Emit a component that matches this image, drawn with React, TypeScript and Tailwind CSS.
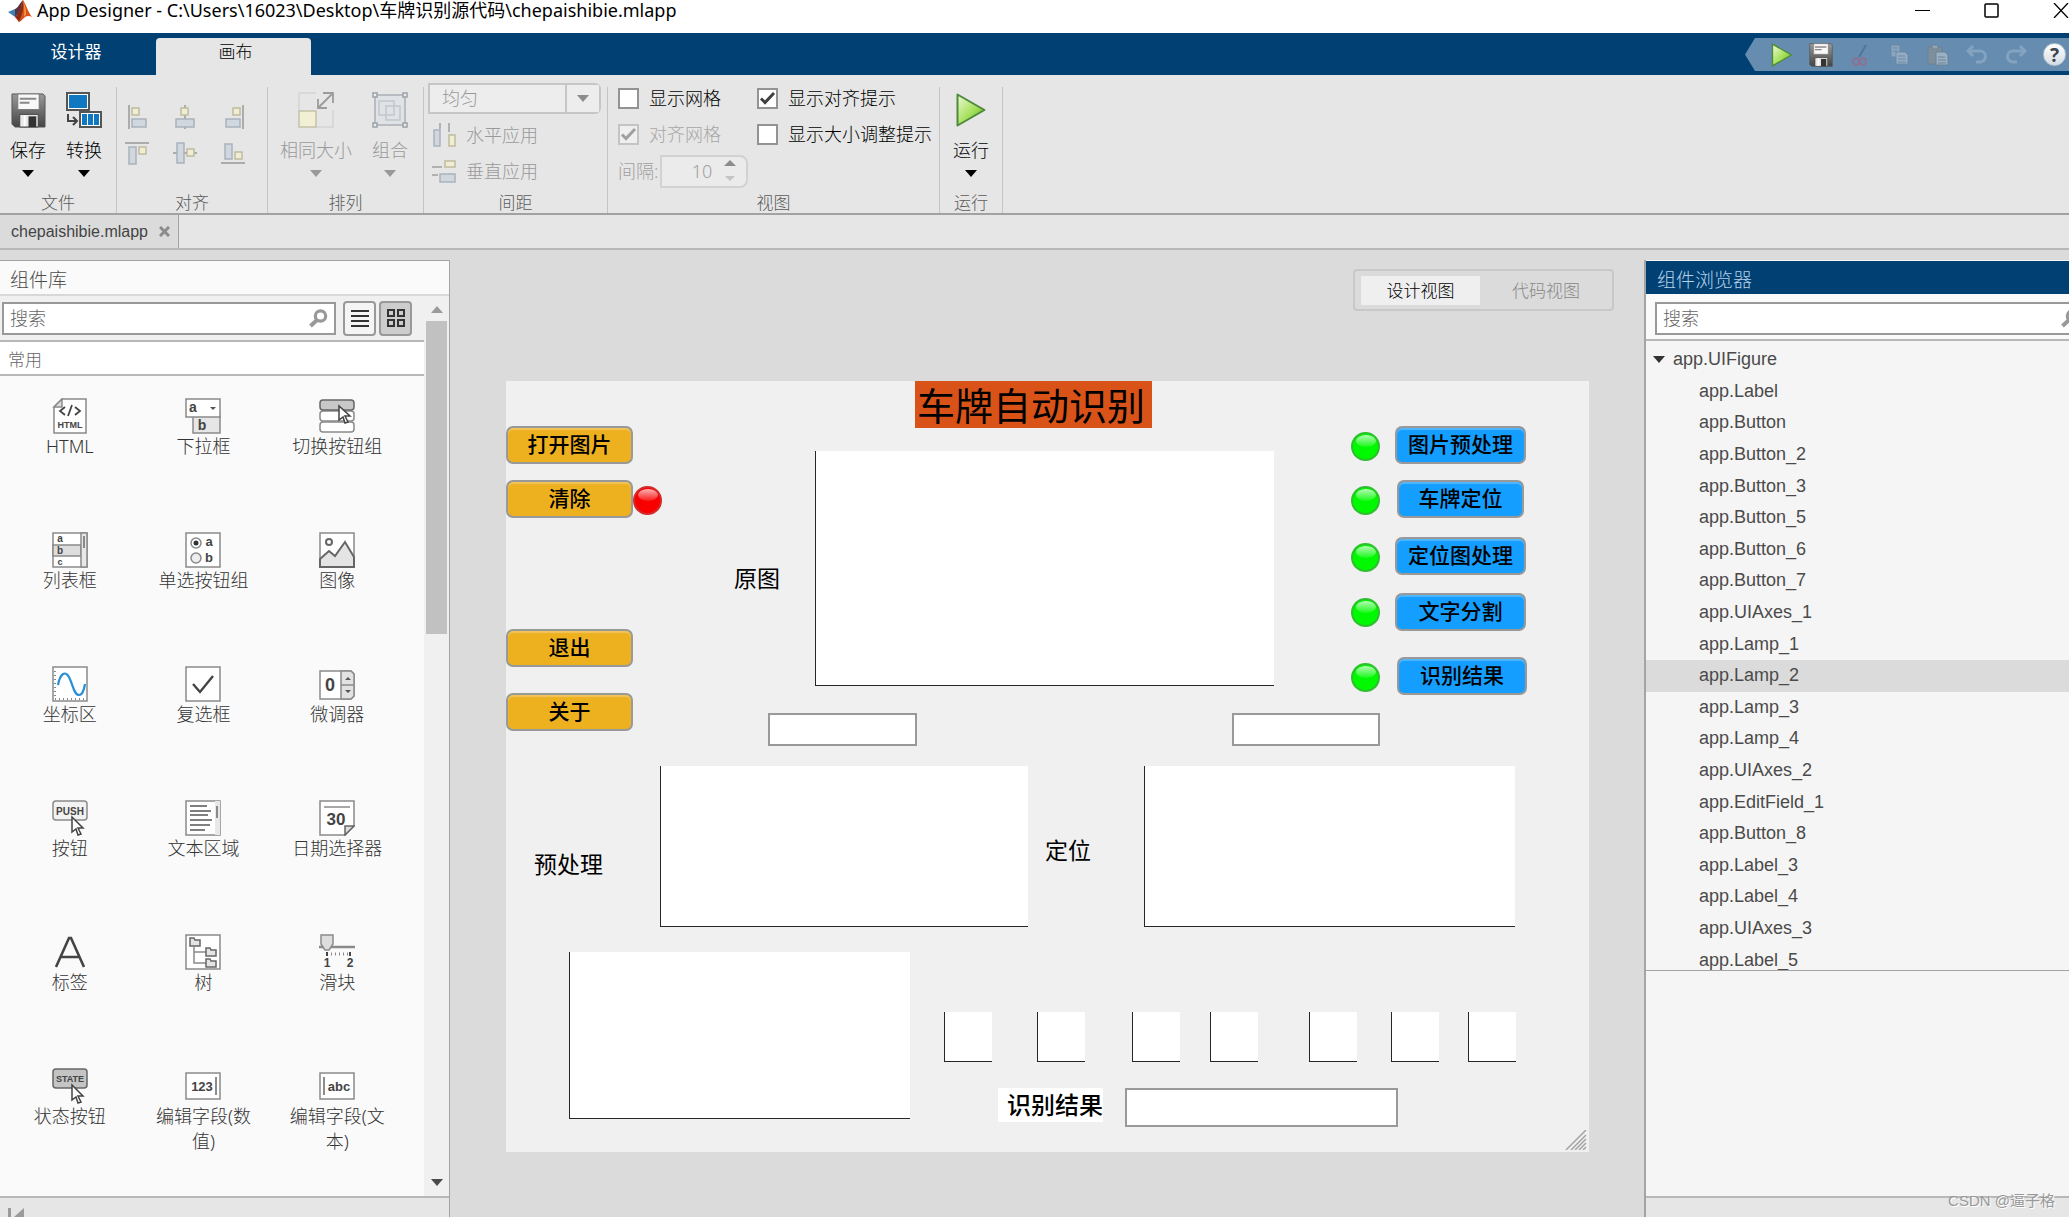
import React from "react";

const UI = "font-['Noto_Sans','Noto_Sans_CJK_SC',sans-serif]";
const ARIAL = "font-['Liberation_Sans','Noto_Sans_CJK_SC',sans-serif]";
const SERIF = "font-['Liberation_Serif','Noto_Sans_CJK_SC',serif]";

type P = { children?: React.ReactNode };

/* ---------- shared glyphs ---------- */

function Caret({ className = "" }: { className?: string }) {
  return (
    <svg className={className} width="12" height="7" viewBox="0 0 12 7" aria-hidden="true">
      <path d="M0 0h12L6 7z" fill="currentColor" />
    </svg>
  );
}

function Magnifier() {
  return (
    <svg width="19" height="19" viewBox="0 0 19 19" fill="none" stroke="#999" aria-hidden="true">
      <circle cx="11.5" cy="7" r="5.2" strokeWidth="3.2" />
      <path d="M7.5 11.5L1.5 17" strokeWidth="4" />
    </svg>
  );
}

function Floppy({ className = "" }: { className?: string }) {
  return (
    <svg className={className} viewBox="0 0 36 36" aria-hidden="true">
      <defs>
        <linearGradient id="floppy" x1="0" y1="0" x2="0" y2="1">
          <stop offset="0" stopColor="#9a9a9a" />
          <stop offset="1" stopColor="#444" />
        </linearGradient>
      </defs>
      <path d="M1 1h32l2 2v32H4l-3-3z" fill="url(#floppy)" stroke="#555" />
      <path d="M7 1h22v16H7z" fill="#f8f8f8" stroke="#777" />
      <path d="M9 6h17M9 10h10" stroke="#888" strokeWidth="2" />
      <path d="M9 22h19v13H9z" fill="#e8e8e8" stroke="#444" />
      <path d="M18 24h8v11h-8z" fill="#333" />
      <path d="M13 23h2v11h-2z" fill="#fff" />
    </svg>
  );
}

function Play({ className = "" }: { className?: string }) {
  return (
    <svg className={className} viewBox="0 0 30 34" aria-hidden="true">
      <defs>
        <linearGradient id="play" x1="0" y1="0" x2="1" y2="1">
          <stop offset="0" stopColor="#eefbd8" />
          <stop offset="0.55" stopColor="#a5e05a" />
          <stop offset="1" stopColor="#5cab1c" />
        </linearGradient>
      </defs>
      <path d="M1.5 1.5v31L28.5 17z" fill="url(#play)" stroke="#4d8a3c" strokeWidth="2" strokeLinejoin="round" />
    </svg>
  );
}

function MatlabLogo() {
  return (
    <svg width="24" height="22" viewBox="0 0 24 22" aria-hidden="true">
      <path d="M0 12l7-3 4 3-4 5z" fill="#3f7fb5" />
      <path d="M7 9c3-1 4-5 8-9l-3 13-5 4z" fill="#5b3340" />
      <path d="M15 0c3 4 5 12 9 17-4-2-6-1-8 1-2 2-3 3-5 4l-4-5c4-2 6-9 8-17z" fill="#d9531e" />
      <path d="M15 0c1 6 0 13-4 22-1-2-2-4-4-5 4-2 6-9 8-17z" fill="#8c2a1a" />
      <path d="M15 1c1 4 2 9 1 16l2-3c0-5-1-9-3-13z" fill="#f6a33b" />
    </svg>
  );
}

/* ---------- ribbon ---------- */

function Section({ label, width, children }: P & { label: string; width: string }) {
  return (
    <>
      <section className={`flex h-full shrink-0 flex-col ${width}`}>
        <div className="flex flex-1">{children}</div>
        <div className="h-5 text-center text-[17px] leading-5 text-[#5a5a5a]">{label}</div>
      </section>
      <div className="mt-3 w-px shrink-0 bg-[#c4c4c4]" />
    </>
  );
}

function Tool({ label, width, muted, children }: P & { label: string; width: string; muted?: boolean }) {
  return (
    <button disabled={muted} className={`flex shrink-0 flex-col items-center self-start pt-[17px] ${width} ${muted ? "text-[#999]" : "text-black"}`}>
      <span className="flex h-9 items-center">{children}</span>
      <span className="mt-2.5 whitespace-nowrap text-[18px] leading-6">{label}</span>
      <Caret className="mt-2" />
    </button>
  );
}

const alignIcons: { name: string; line: string; small: [number, number]; big: [number, number, number, number] }[] = [
  { name: "左对齐", line: "M4 0v24", small: [7, 3], big: [7, 14, 14, 8] },
  { name: "水平居中", line: "M12 0v24", small: [8, 3], big: [3, 14, 18, 8] },
  { name: "右对齐", line: "M22 0v24", small: [12, 3], big: [5, 14, 14, 8] },
  { name: "顶端对齐", line: "M0 2h24", small: [14, 6], big: [4, 6, 7, 17] },
  { name: "垂直居中", line: "M0 12h24", small: [14, 8], big: [4, 2, 7, 20] },
  { name: "底端对齐", line: "M0 22h24", small: [14, 11], big: [4, 3, 7, 15] },
];

function AlignIcon({ line, small, big }: (typeof alignIcons)[number]) {
  return (
    <svg width="24" height="24" viewBox="0 0 24 24" strokeWidth="1.5" aria-hidden="true">
      <path d={line} stroke="#acacac" strokeWidth="2" />
      <rect x={big[0]} y={big[1]} width={big[2]} height={big[3]} fill="#d0d7de" stroke="#a9b3bc" />
      <rect x={small[0]} y={small[1]} width="7" height="7" fill="#f0eed2" stroke="#bfbca0" />
    </svg>
  );
}

function Check({ label, checked, muted }: { label: string; checked?: boolean; muted?: boolean }) {
  return (
    <label className={`flex h-9 items-center gap-2.5 whitespace-nowrap text-[18px] leading-6 ${muted ? "text-[#a6a6a6]" : "text-black"}`}>
      <span className="grid shrink-0">
        <input
          type="checkbox"
          defaultChecked={checked}
          disabled={muted}
          className="peer col-start-1 row-start-1 size-[21px] appearance-none border-2 border-[#939393] bg-white disabled:border-[#c4c4c4] disabled:bg-[#efefef]"
        />
        <svg className="pointer-events-none invisible col-start-1 row-start-1 peer-checked:visible" width="21" height="21" viewBox="0 0 21 21" fill="none" stroke={muted ? "#a0a0a0" : "#404040"} strokeWidth="3" aria-hidden="true">
          <path d="M4 10.5l4 4 9-9.5" />
        </svg>
      </span>
      {label}
    </label>
  );
}

function Ribbon() {
  return (
    <div className={`flex h-[140px] shrink-0 overflow-hidden border-b-2 border-[#a2a2a2] bg-[#e6e6e6] font-light ${UI}`}>
      <Section label="文件" width="w-[116px]">
        <Tool label="保存" width="w-14">
          <Floppy className="size-[35px]" />
        </Tool>
        <Tool label="转换" width="w-14">
          <svg width="36" height="36" viewBox="0 0 36 36" aria-hidden="true">
            <path d="M1 1h22v17H1z" fill="#fff" stroke="#555" strokeWidth="2" />
            <path d="M3 3h18v13H3z" fill="#0f78c0" />
            <path d="M2 22v7h8M7 25l4 4-4 4" fill="none" stroke="#444" strokeWidth="2" />
            <path d="M14 20h21v15H14z" fill="#fff" stroke="#555" strokeWidth="2" />
            <path d="M16 22h5v11h-5zM22 22h5v11h-5zM28 22h5v11h-5z" fill="#0f78c0" />
          </svg>
        </Tool>
      </Section>

      <Section label="对齐" width="w-[150px]">
        <div className="grid h-fit grid-cols-[24px_24px_24px] gap-x-6 gap-y-3 pt-[30px] pl-2">
          {alignIcons.map((a) => (
            <button key={a.name} aria-label={a.name} disabled>
              <AlignIcon {...a} />
            </button>
          ))}
        </div>
      </Section>

      <Section label="排列" width="w-[155px]">
        <div className="flex gap-5 pl-3">
          <Tool label="相同大小" width="w-[72px]" muted>
            <svg width="36" height="36" viewBox="0 0 36 36" fill="none" aria-hidden="true">
              <path d="M1 18V1h17M35 18v17H18" stroke="#d4d4d4" strokeWidth="1.5" />
              <path d="M1 19h17v16H1z" fill="#f1efd4" stroke="#c5c2a8" strokeWidth="1.5" />
              <path d="M20 16L35 1M25 1h10v10M20 7v9h9" stroke="#9c9c9c" strokeWidth="1.8" />
            </svg>
          </Tool>
          <Tool label="组合" width="w-9" muted>
            <svg width="36" height="36" viewBox="0 0 36 36" fill="none" aria-hidden="true">
              <path d="M3 3h30v30H3z" fill="#dfe3e6" stroke="#aab0b6" strokeWidth="1.5" />
              <path d="M7 9h15v14H7zM14 14h14v14H14z" stroke="#c3c8cc" strokeWidth="1.5" />
              <path d="M1 1h4v4H1zM31 1h4v4h-4zM1 31h4v4H1zM31 31h4v4h-4z" fill="#eee" stroke="#9aa1a8" strokeWidth="1.5" />
            </svg>
          </Tool>
        </div>
      </Section>

      <Section label="间距" width="w-[183px]">
        <div className="flex flex-col pt-2 pl-1 text-[#999]">
          <div className="mb-[3px] grid h-[31px] w-[173px] grid-cols-[1fr_34px] items-center rounded-r-md border-2 border-[#c6c6c6]">
            <select disabled aria-label="间距方式" className="col-span-2 col-start-1 row-start-1 h-full w-full appearance-none bg-[#ededed] pl-3 text-[18px] text-[#999] opacity-100">
              <option>均匀</option>
            </select>
            <span className="pointer-events-none col-start-2 row-start-1 flex h-full items-center justify-center border-l-2 border-[#c6c6c6] text-[#8c8c8c]">
              <Caret />
            </span>
          </div>
          <button disabled className="flex h-9 items-center gap-2.5 pl-1 text-[18px] leading-6">
            <svg width="24" height="24" viewBox="0 0 24 24" strokeWidth="1.5" aria-hidden="true">
              <path d="M8 0v6M17 0v9" stroke="#a0a0a0" strokeWidth="1.5" />
              <path d="M2 7h6v16H2z" fill="#d0d7de" stroke="#a9b3bc" />
              <path d="M17 12h6v11h-6z" fill="#f0eed2" stroke="#bfbca0" />
            </svg>
            水平应用
          </button>
          <button disabled className="flex h-9 items-center gap-2.5 pl-1 text-[18px] leading-6">
            <svg width="24" height="24" viewBox="0 0 24 24" strokeWidth="1.5" aria-hidden="true">
              <path d="M0 8h10M0 16h6" stroke="#a0a0a0" strokeWidth="1.5" />
              <path d="M13 2h10v6H13z" fill="#f0eed2" stroke="#bfbca0" />
              <path d="M8 15h15v8H8z" fill="#d0d7de" stroke="#a9b3bc" />
            </svg>
            垂直应用
          </button>
        </div>
      </Section>

      <Section label="视图" width="w-[331px]">
        <div className="grid h-fit grid-cols-[139px_1fr] pt-[5px] pl-2.5">
          <Check label="显示网格" />
          <Check label="显示对齐提示" checked />
          <Check label="对齐网格" checked muted />
          <Check label="显示大小调整提示" />
          <label className="flex h-[38px] items-center text-[18px] whitespace-nowrap text-[#a0a0a0]">
            间隔:
            <span className="ml-0.5 flex h-[33px] w-[88px] shrink-0 items-center rounded-r-lg border-2 border-[#d2d2d2] bg-[#ebebeb]">
              <input disabled defaultValue="10" className="w-[50px] bg-transparent text-right text-[18px]" />
              <svg className="ml-3" width="12" height="22" viewBox="0 0 12 22" aria-hidden="true">
                <path d="M0 6l6-6 6 6z" fill="#8c8c8c" />
                <path d="M1 16h10l-5 5z" fill="#c4c4c4" />
              </svg>
            </span>
          </label>
        </div>
      </Section>

      <Section label="运行" width="w-[62px]">
        <Tool label="运行" width="w-full">
          <Play className="h-[34px] w-[30px]" />
        </Tool>
      </Section>
    </div>
  );
}

/* ---------- quick access ---------- */

const quick: { name: string; icon: React.ReactNode }[] = [
  { name: "运行", icon: <Play className="h-6 w-[22px]" /> },
  { name: "保存", icon: <Floppy className="size-6" /> },
  {
    name: "剪切",
    icon: (
      <svg width="18" height="24" viewBox="0 0 18 24" fill="none" aria-hidden="true">
        <path d="M15 2L8 14" stroke="#4f7699" strokeWidth="2" />
        <path d="M5 15a3 3.5 0 1 0 .1 0zM12 15a3 3.5 0 1 0 .1 0z" stroke="#8d7192" strokeWidth="2" />
      </svg>
    ),
  },
  {
    name: "复制",
    icon: (
      <svg width="22" height="24" viewBox="0 0 22 24" stroke="#6a89a6" aria-hidden="true">
        <path d="M3 2h9v12H3z" fill="#8ba6bf" />
        <path d="M5 5h5M5 8h4" />
        <path d="M8 9h9l3 3v9H8z" fill="#95adc4" />
        <path d="M10 13h7M10 16h8M10 19h8" />
      </svg>
    ),
  },
  {
    name: "粘贴",
    icon: (
      <svg width="22" height="24" viewBox="0 0 22 24" stroke="#6c8296" aria-hidden="true">
        <path d="M1 4h14v17H1z" fill="#7d8f9a" />
        <path d="M5 2h6v4H5z" fill="#8fa3b3" />
        <path d="M9 9h9l3 3v10H9z" fill="#9ab0c5" />
        <path d="M11 14h7M11 17h8M11 20h8" />
      </svg>
    ),
  },
  {
    name: "撤消",
    icon: (
      <svg width="22" height="22" viewBox="0 0 22 22" fill="none" stroke="#83a3c1" strokeWidth="3" aria-hidden="true">
        <path d="M7 2L2 7l5 5M2 7h12a5.500 5.500 0 0 1 0 11h-4" />
      </svg>
    ),
  },
  {
    name: "重做",
    icon: (
      <svg width="22" height="22" viewBox="0 0 22 22" fill="none" stroke="#83a3c1" strokeWidth="3" aria-hidden="true">
        <path d="M15 2l5 5-5 5M20 7H8a5.500 5.500 0 0 0 0 11h4" />
      </svg>
    ),
  },
  {
    name: "帮助",
    icon: (
      <span className="flex size-[23px] items-center justify-center rounded-full border border-[#b8c6d2] bg-linear-to-b from-white to-[#d5dde4] text-[19px] leading-5 font-bold text-[#3c4650]">
        ?
      </span>
    ),
  },
];

function TabBar() {
  return (
    <div className={`flex h-[42px] shrink-0 items-end bg-[#004073] text-[17px] ${UI}`} role="tablist">
      <button role="tab" aria-selected="false" className="h-[37px] w-[156px] pr-1 pb-2.5 text-white">
        设计器
      </button>
      <button role="tab" aria-selected="true" className="h-[37px] w-[155px] rounded-t-sm bg-[#e6e6e6] pb-2.5 pl-1 font-light text-black">
        画布
      </button>
      <div className="mb-1 ml-auto flex h-[33px] w-[324px] overflow-hidden bg-[#668daf] pl-[17px] [clip-path:polygon(10px_0,100%_0,100%_100%,10px_100%,0_50%)]">
        {quick.map((q) => (
          <button key={q.name} aria-label={q.name} className="flex w-[39px] shrink-0 items-center justify-center">
            {q.icon}
          </button>
        ))}
      </div>
    </div>
  );
}

/* ---------- component library ---------- */

function Glyph({ children }: P) {
  return (
    <svg width="36" height="36" viewBox="0 0 36 36" fill="none" stroke="#8a8a8a" strokeWidth="1.500" aria-hidden="true">
      {children}
    </svg>
  );
}

function T({ x, y, size, children }: P & { x: number; y: number; size: number }) {
  return (
    <text x={x} y={y} fontSize={size} textAnchor="middle" stroke="none" fill="#444" className="font-['Liberation_Sans',sans-serif] font-bold">
      {children}
    </text>
  );
}

const Pointer = () => <path d="M20 17v15l4-3 2 6 3-1-3-6h5z" fill="#fff" stroke="#444" />;

const library: { label: string; icon: React.ReactNode }[] = [
  {
    label: "HTML",
    icon: (
      <Glyph>
        <path d="M10 1h24v34H2V9z" fill="#fff" />
        <path d="M2 9h8V1z" fill="#ddd" />
        <path d="M13 9l-5 4 5 4M23 9l5 4-5 4M20 7l-4 11" stroke="#444" strokeWidth="1.800" />
        <T x={18} y={30} size={9}>HTML</T>
      </Glyph>
    ),
  },
  {
    label: "下拉框",
    icon: (
      <Glyph>
        <path d="M8 18h27v17H8z" fill="#e6e6e6" />
        <path d="M1 1h34v18H1z" fill="#fff" />
        <path d="M25 9h6l-3 3z" fill="#555" stroke="none" />
        <T x={8} y={14} size={14}>a</T>
        <T x={17} y={32} size={14}>b</T>
      </Glyph>
    ),
  },
  {
    label: "切换按钮组",
    icon: (
      <Glyph>
        <rect x="1" y="24" width="34" height="10" rx="3" fill="#fff" />
        <rect x="1" y="13" width="34" height="10" rx="3" fill="#fff" />
        <rect x="1" y="2" width="34" height="10" rx="3" fill="#c8c8c8" stroke="#666" />
        <path d="M20 8v14l4-3 2 6 3-1-3-6h5z" fill="#fff" stroke="#444" />
      </Glyph>
    ),
  },
  {
    label: "列表框",
    icon: (
      <Glyph>
        <path d="M1 1h34v34H1z" fill="#fff" />
        <path d="M1 13h28v11H1z" fill="#ddd" />
        <path d="M29 1h6v34h-6z" fill="#e8e8e8" />
        <path d="M32 4v12" strokeWidth="2" />
        <T x={8} y={10} size={10}>a</T>
        <T x={8} y={22} size={10}>b</T>
        <T x={8} y={33} size={9}>c</T>
      </Glyph>
    ),
  },
  {
    label: "单选按钮组",
    icon: (
      <Glyph>
        <path d="M1 1h34v34H1z" fill="#fff" />
        <circle cx="11" cy="11" r="5" />
        <circle cx="11" cy="11" r="2.500" fill="#333" stroke="none" />
        <circle cx="11" cy="26" r="5" fill="#eee" />
        <T x={24} y={14} size={13}>a</T>
        <T x={24} y={30} size={13}>b</T>
      </Glyph>
    ),
  },
  {
    label: "图像",
    icon: (
      <Glyph>
        <path d="M1 1h34v34H1z" fill="#fff" />
        <path d="M1 27l9-8 6 5 10-14 9 15v10H1z" fill="#e4e4e4" stroke="#666" strokeWidth="2" />
        <circle cx="10" cy="10" r="3" stroke="#666" strokeWidth="2" />
      </Glyph>
    ),
  },
  {
    label: "坐标区",
    icon: (
      <Glyph>
        <path d="M1 1h34v34H1z" fill="#fff" />
        <path d="M3 5v28h29" strokeDasharray="1 3" strokeWidth="2" />
        <path d="M6 19C8 8 13 4 17 11c4 8 5 18 10 18 4 0 5-6 6-11" stroke="#2a8fd6" strokeWidth="2.200" />
      </Glyph>
    ),
  },
  {
    label: "复选框",
    icon: (
      <Glyph>
        <path d="M1 1h34v34H1z" fill="#fff" />
        <path d="M8 18l7 8L28 10" stroke="#444" strokeWidth="2.400" />
      </Glyph>
    ),
  },
  {
    label: "微调器",
    icon: (
      <Glyph>
        <path d="M1 5h31l3 3v22l-3 3H1z" fill="#fff" />
        <path d="M22 5h10l3 3v22l-3 3H22zM22 19h13" fill="#e2e2e2" />
        <path d="M26 14h6l-3-3zM26 24h6l-3 3z" fill="#555" stroke="none" />
        <T x={11} y={25} size={18}>0</T>
      </Glyph>
    ),
  },
  {
    label: "按钮",
    icon: (
      <Glyph>
        <rect x="1" y="1" width="34" height="19" rx="3" fill="#f2f2f2" />
        <T x={18} y={15} size={10}>PUSH</T>
        <Pointer />
      </Glyph>
    ),
  },
  {
    label: "文本区域",
    icon: (
      <Glyph>
        <path d="M1 1h34v34H1z" fill="#fff" />
        <path d="M30 1h5v34h-5z" fill="#e8e8e8" stroke="none" />
        <path d="M5 6h17M5 11h21M5 15h18M5 20h22M5 25h20M5 30h15" stroke="#555" strokeWidth="1.600" />
        <path d="M32 6v12" strokeWidth="2" />
      </Glyph>
    ),
  },
  {
    label: "日期选择器",
    icon: (
      <Glyph>
        <path d="M1 1h34v25l-9 9H1z" fill="#fff" />
        <path d="M5 7h26" />
        <path d="M26 35v-9h9z" fill="#ddd" stroke="#666" />
        <T x={17} y={25} size={17}>30</T>
      </Glyph>
    ),
  },
  {
    label: "标签",
    icon: (
      <Glyph>
        <path d="M4 33L17 4h2l13 29M9 23h18" stroke="#444" strokeWidth="2.600" />
      </Glyph>
    ),
  },
  {
    label: "树",
    icon: (
      <Glyph>
        <path d="M1 1h34v34H1z" fill="#fff" />
        <path d="M9 13v16h12M9 18h12" />
        <path d="M5 4h4l1 2h5v6H5zM21 14h4l1 2h5v6H21zM21 25h4l1 2h5v6H21z" fill="#e4e4e4" stroke="#666" />
      </Glyph>
    ),
  },
  {
    label: "滑块",
    icon: (
      <Glyph>
        <path d="M0 13h36" strokeWidth="2.500" />
        <path d="M2 1h12v9l-4 6H6l-4-6z" fill="#ddd" />
        <path d="M8 18v4M31 18v4" stroke="#444" strokeWidth="2" />
        <path d="M12 20h17" strokeDasharray="1 3" strokeWidth="3" />
        <T x={8} y={33} size={12}>1</T>
        <T x={31} y={33} size={12}>2</T>
      </Glyph>
    ),
  },
  {
    label: "状态按钮",
    icon: (
      <Glyph>
        <rect x="1" y="1" width="34" height="19" rx="3" fill="#c4c4c4" stroke="#666" />
        <T x={18} y={14} size={9}>STATE</T>
        <Pointer />
      </Glyph>
    ),
  },
  {
    label: "编辑字段(数值)",
    icon: (
      <Glyph>
        <path d="M1 5h34v26H1z" fill="#fff" />
        <path d="M31 9v18" stroke="#666" />
        <T x={17} y={23} size={13}>123</T>
      </Glyph>
    ),
  },
  {
    label: "编辑字段(文本)",
    icon: (
      <Glyph>
        <path d="M1 5h34v26H1z" fill="#fff" />
        <path d="M5 9v18" stroke="#666" />
        <T x={20} y={23} size={13}>abc</T>
      </Glyph>
    ),
  },
];

function LibraryPanel() {
  return (
    <aside className={`flex w-[450px] shrink-0 flex-col border-t border-r border-[#a4a4a4] bg-[#fafafa] font-light ${UI}`}>
      <h2 className="h-[35px] shrink-0 border-b-2 border-[#d8d8d8] pl-2.5 text-[19px] leading-[38px] font-light text-[#4c4c4c]">组件库</h2>
      <div className="flex min-h-0 flex-1">
        <div className="flex w-[424px] shrink-0 flex-col">
          <div className="flex h-[46px] shrink-0 items-center border-b-2 border-[#b8b8b8] bg-[#f0f0f0] pl-0.5">
            <label className="flex h-[33px] w-[334px] items-center border-2 border-[#999] bg-white pr-1.5">
              <input placeholder="搜索" aria-label="搜索组件" className="min-w-0 flex-1 pl-1.5 text-[18px] placeholder:text-[#666]" />
              <Magnifier />
            </label>
            <button aria-label="列表视图" className="ml-[7px] flex h-[35px] w-[33px] items-center justify-center rounded border-2 border-[#999] bg-[#f5f5f5]">
              <svg width="18" height="18" viewBox="0 0 18 18" stroke="#333" strokeWidth="2" aria-hidden="true">
                <path d="M0 2h18M0 7h18M0 12h18M0 17h18" />
              </svg>
            </button>
            <button aria-label="网格视图" className="ml-[3px] flex h-[35px] w-[33px] items-center justify-center rounded border-2 border-[#999] bg-[#cdcdcd]">
              <svg width="20" height="20" viewBox="0 0 20 20" fill="none" stroke="#333" strokeWidth="2" aria-hidden="true">
                <path d="M2 2h6v6H2zM12 2h6v6h-6zM2 12h6v6H2zM12 12h6v6h-6z" />
              </svg>
            </button>
          </div>
          <h3 className="h-[34px] shrink-0 border-b-2 border-[#b8b8b8] bg-white pl-2 text-[17px] leading-9 font-light text-[#666]">常用</h3>
          <div className="grid auto-rows-[134px] grid-cols-3 pt-[22px] pr-5 pl-[3px]">
            {library.map((c) => (
              <button key={c.label} className="flex flex-col items-center self-start px-3">
                {c.icon}
                <span className="text-[18px] leading-[25px] text-[#333]">{c.label}</span>
              </button>
            ))}
          </div>
        </div>
        <div className="flex w-[25px] flex-col items-center bg-[#f0f0f0] pt-2.5">
          <Caret className="rotate-180 text-[#9a9a9a]" />
          <div className="mt-2 h-[313px] w-[21px] bg-[#c1c1c1]" />
          <Caret className="mt-auto mb-2.5 text-[#4a4a4a]" />
        </div>
      </div>
      <div className="flex h-[21px] shrink-0 items-start border-t-2 border-[#b8b8b8] bg-[#e6e6e6] pt-2.5 pl-2">
        <svg width="17" height="9" viewBox="0 0 17 9" fill="#9a9a9a" aria-hidden="true">
          <path d="M0 0h3v9H0zM16 0v9H6z" />
        </svg>
      </div>
    </aside>
  );
}

/* ---------- design canvas: every item has its own free position ---------- */

function Axes({ place }: { place: string }) {
  return <div className={`absolute border-b border-l border-[#262626] bg-white ${place}`} />;
}

function Field({ place, name }: { place: string; name: string }) {
  return <input aria-label={name} className={`absolute border-2 border-[#999] bg-white ${place}`} />;
}

function PushButton({ place, tone, label }: { place: string; tone: string; label: string }) {
  return (
    <button className={`absolute flex h-[38px] items-center justify-center rounded-[7px] border-2 border-[#999] text-[21px] leading-none font-medium text-black shadow-[inset_0_2px_1px_rgba(255,255,255,0.25)] ${place} ${tone}`}>
      {label}
    </button>
  );
}

function Lamp({ place, tone }: { place: string; tone: string }) {
  return (
    <div className={`absolute size-[29px] overflow-hidden rounded-full border-2 ${place} ${tone}`}>
      <div className="mx-auto mt-px h-3 w-5 rounded-[50%] bg-linear-to-b from-white/70 to-white/10" />
    </div>
  );
}

const YELLOW = "bg-[#edb120] w-[127px]";
const BLUE = "bg-[#149eff]";
const GREEN = "border-[#2fbf2f] bg-[#00f800]";

function DesignCanvas() {
  return (
    <div className={`relative mt-[70px] ml-14 h-[771px] w-[1083px] shrink-0 bg-[#f0f0f0] text-black ${SERIF}`}>
      <h1 className="absolute top-0 left-[409px] h-[47px] w-[237px] bg-[#d95319] pl-0.5 text-[38px] leading-[52px] whitespace-nowrap">车牌自动识别</h1>

      <PushButton place="left-0 top-[45px]" tone={YELLOW} label="打开图片" />
      <PushButton place="left-0 top-[99px]" tone={YELLOW} label="清除" />
      <Lamp place="left-[127px] top-[105px]" tone="border-[#d42a2a] bg-[#f80000]" />
      <PushButton place="left-0 top-[248px]" tone={YELLOW} label="退出" />
      <PushButton place="left-0 top-[312px]" tone={YELLOW} label="关于" />

      <span className="absolute top-[185px] left-[228px] text-[23px] leading-7">原图</span>
      <Axes place="left-[309px] top-[70px] h-[235px] w-[459px]" />

      <Lamp place="left-[845px] top-[51px]" tone={GREEN} />
      <Lamp place="left-[845px] top-[105px]" tone={GREEN} />
      <Lamp place="left-[845px] top-[162px]" tone={GREEN} />
      <Lamp place="left-[845px] top-[217px]" tone={GREEN} />
      <Lamp place="left-[845px] top-[282px]" tone={GREEN} />
      <PushButton place="left-[889px] top-[45px] w-[131px]" tone={BLUE} label="图片预处理" />
      <PushButton place="left-[891px] top-[99px] w-[127px]" tone={BLUE} label="车牌定位" />
      <PushButton place="left-[889px] top-[156px] w-[131px]" tone={BLUE} label="定位图处理" />
      <PushButton place="left-[889px] top-[212px] w-[131px]" tone={BLUE} label="文字分割" />
      <PushButton place="left-[891px] top-[276px] w-[130px]" tone={BLUE} label="识别结果" />

      <Field name="预处理结果" place="left-[262px] top-[332px] h-[33px] w-[149px]" />
      <Field name="定位结果" place="left-[726px] top-[332px] h-[33px] w-[148px]" />

      <span className="absolute top-[471px] left-[28px] text-[23px] leading-7">预处理</span>
      <Axes place="left-[154px] top-[385px] h-[161px] w-[368px]" />
      <span className="absolute top-[457px] left-[539px] text-[23px] leading-7">定位</span>
      <Axes place="left-[638px] top-[385px] h-[161px] w-[371px]" />

      <Axes place="left-[63px] top-[571px] h-[167px] w-[341px]" />
      <Axes place="left-[438px] top-[631px] h-[50px] w-12" />
      <Axes place="left-[531px] top-[631px] h-[50px] w-12" />
      <Axes place="left-[626px] top-[631px] h-[50px] w-12" />
      <Axes place="left-[704px] top-[631px] h-[50px] w-12" />
      <Axes place="left-[803px] top-[631px] h-[50px] w-12" />
      <Axes place="left-[885px] top-[631px] h-[50px] w-12" />
      <Axes place="left-[962px] top-[631px] h-[50px] w-12" />

      <label htmlFor="result" className="absolute top-[707px] left-[492px] h-[34px] w-[105px] bg-white text-right text-[24px] leading-[37px] font-medium whitespace-nowrap">
        识别结果
      </label>
      <input id="result" className="absolute top-[707px] left-[619px] h-[39px] w-[273px] border-2 border-[#999] bg-white" />

      <svg className="absolute right-0.5 bottom-0.5" width="22" height="20" viewBox="0 0 22 20" stroke="#a4a4a4" strokeWidth="1.500" aria-hidden="true">
        <path d="M1 20L21 0M6 20L21 5M10 20L21 9M14 20l7-7M18 20l3-3" />
      </svg>
    </div>
  );
}

/* ---------- component browser ---------- */

const tree = [
  "Label", "Button", "Button_2", "Button_3", "Button_5", "Button_6", "Button_7", "UIAxes_1", "Lamp_1", "Lamp_2",
  "Lamp_3", "Lamp_4", "UIAxes_2", "EditField_1", "Button_8", "Label_3", "Label_4", "UIAxes_3", "Label_5",
];

function BrowserPanel() {
  return (
    <aside className="relative flex w-[425px] shrink-0 flex-col overflow-hidden border-l-2 border-[#a4a4a4] bg-[#f5f5f5]">
      <h2 className={`mt-px h-[33px] shrink-0 bg-[#004073] pl-[11px] text-[19px] leading-[38px] font-light text-[#b4d0e8] ${UI}`}>组件浏览器</h2>
      <div className={`flex h-[47px] shrink-0 items-center border-b-2 border-[#b8b8b8] bg-[#fafafa] pt-[3px] pl-[9px] font-light ${UI}`}>
        <label className="flex h-[33px] w-[430px] shrink-0 items-center border-2 border-[#999] bg-white">
          <input placeholder="搜索" aria-label="搜索浏览器" className="w-[404px] shrink-0 pl-1.5 text-[18px] placeholder:text-[#666]" />
          <Magnifier />
        </label>
      </div>
      <div className="h-[630px] shrink-0 overflow-hidden border-b border-[#a4a4a4]">
        <ul className={`flex h-[635px] flex-col pt-[3px] text-[18px] text-[#4a4a4a] ${ARIAL}`}>
          <li className="flex flex-1 items-center pl-[7px]">
            <Caret className="mr-2 text-[#333]" />
            app.UIFigure
          </li>
          {tree.map((n) => (
            <li key={n} className={`flex flex-1 items-center pl-[53px] ${n === "Lamp_2" ? "bg-[#dbdbdb]" : ""}`}>
              app.{n}
            </li>
          ))}
        </ul>
      </div>
      <div className="mt-auto h-[21px] shrink-0 border-t-2 border-[#b8b8b8] bg-[#e6e6e6]" />
      <span className={`absolute right-[14px] bottom-1 text-[15px] leading-6 text-[#999] [text-shadow:1px_1px_0_#fff] ${ARIAL}`}>CSDN @逼子格</span>
    </aside>
  );
}

export default function App() {
  return (
    <div className="flex h-screen flex-col overflow-hidden bg-[#dbdbdb]">
      <header className={`flex h-[33px] shrink-0 items-start overflow-hidden bg-white pl-2 text-[18px] text-black ${UI}`}>
        <MatlabLogo />
        <span className="ml-[5px] leading-[20px] whitespace-nowrap">App Designer - C:\Users\16023\Desktop\车牌识别源代码\chepaishibie.mlapp</span>
        <div className="ml-auto flex gap-[54px] pt-[3px]">
          <button aria-label="最小化">
            <svg width="15" height="15" viewBox="0 0 15 15" stroke="#000" aria-hidden="true"><path d="M0 7.500h15" /></svg>
          </button>
          <button aria-label="最大化">
            <svg width="15" height="15" viewBox="0 0 15 15" stroke="#000" strokeWidth="1.500" fill="none" aria-hidden="true"><rect x="1" y="1" width="13" height="13" rx="1" /></svg>
          </button>
          <button aria-label="关闭">
            <svg width="16" height="15" viewBox="0 0 16 15" stroke="#000" strokeWidth="1.300" aria-hidden="true"><path d="M1 0l14 15M15 0L1 15" /></svg>
          </button>
        </div>
      </header>

      <TabBar />
      <Ribbon />

      <div className={`flex h-[35px] shrink-0 border-b-2 border-[#b8b8b8] bg-[#e6e6e6] ${ARIAL}`}>
        <div className="flex w-[179px] items-center justify-between border-r border-[#a4a4a4] bg-[#dbdbdb] pr-2 pl-[11px] text-[16px] text-[#444]">
          chepaishibie.mlapp
          <button aria-label="关闭文件">
            <svg width="11" height="11" viewBox="0 0 11 11" stroke="#8c8c8c" strokeWidth="3" aria-hidden="true"><path d="M1 1l9 9M10 1l-9 9" /></svg>
          </button>
        </div>
      </div>

      <div className="flex min-h-0 flex-1 pt-2.5">
        <LibraryPanel />
        <main className="flex min-w-0 flex-1 flex-col overflow-hidden">
          <div className={`mt-[9px] mr-[30px] flex h-[42px] w-[261px] shrink-0 items-center self-end rounded border-2 border-[#c8c8c8] px-1.5 text-[17px] font-light ${UI}`}>
            <button className="h-[29px] w-[119px] bg-[#efefef] leading-[29px] text-black">设计视图</button>
            <button className="h-[29px] flex-1 pl-1.5 text-center leading-[29px] text-[#888]">代码视图</button>
          </div>
          <DesignCanvas />
        </main>
        <BrowserPanel />
      </div>
    </div>
  );
}
